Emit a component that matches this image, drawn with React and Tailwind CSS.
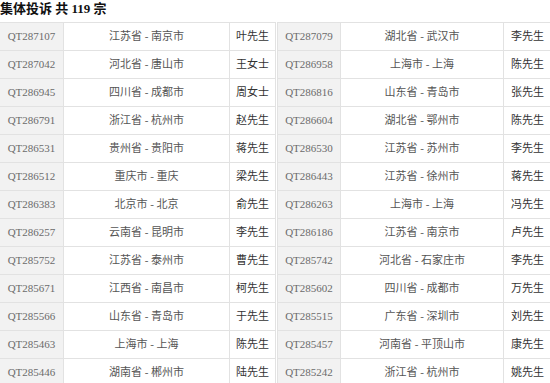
import React from "react";

const left = [
  ["QT287107", "江苏省 - 南京市", "叶先生"],
  ["QT287042", "河北省 - 唐山市", "王女士"],
  ["QT286945", "四川省 - 成都市", "周女士"],
  ["QT286791", "浙江省 - 杭州市", "赵先生"],
  ["QT286531", "贵州省 - 贵阳市", "蒋先生"],
  ["QT286512", "重庆市 - 重庆", "梁先生"],
  ["QT286383", "北京市 - 北京", "俞先生"],
  ["QT286257", "云南省 - 昆明市", "李先生"],
  ["QT285752", "江苏省 - 泰州市", "曹先生"],
  ["QT285671", "江西省 - 南昌市", "柯先生"],
  ["QT285566", "山东省 - 青岛市", "于先生"],
  ["QT285463", "上海市 - 上海", "陈先生"],
  ["QT285446", "湖南省 - 郴州市", "陆先生"],
];

const right = [
  ["QT287079", "湖北省 - 武汉市", "李先生"],
  ["QT286958", "上海市 - 上海", "陈先生"],
  ["QT286816", "山东省 - 青岛市", "张先生"],
  ["QT286604", "湖北省 - 鄂州市", "陈先生"],
  ["QT286530", "江苏省 - 苏州市", "李先生"],
  ["QT286443", "江苏省 - 徐州市", "蒋先生"],
  ["QT286263", "上海市 - 上海", "冯先生"],
  ["QT286186", "江苏省 - 南京市", "卢先生"],
  ["QT285742", "河北省 - 石家庄市", "李先生"],
  ["QT285602", "四川省 - 成都市", "万先生"],
  ["QT285515", "广东省 - 深圳市", "刘先生"],
  ["QT285457", "河南省 - 平顶山市", "康先生"],
  ["QT285242", "浙江省 - 杭州市", "姚先生"],
];

function Table({ rows, isLeft }) {
  return (
    <div
      className={
        isLeft
          ? "w-[276px] shrink-0 border-t border-[#e2e2e2]"
          : "w-[273px] shrink-0 border-t border-l border-[#e2e2e2]"
      }
    >
      {rows.map((r) => (
        <div key={r[0]} className="flex h-[28px] border-b border-[#e2e2e2]">
          <div
            className={
              (isLeft ? "w-[64px]" : "w-[63px]") +
              " shrink-0 bg-[#f2f2f2] border-r border-[#e2e2e2] flex items-center justify-center text-[#6b6b6b]"
            }
          >
            {r[0]}
          </div>
          <div
            className={
              (isLeft ? "w-[166px]" : "w-[163px]") +
              " shrink-0 border-r border-[#e2e2e2] flex items-center justify-center text-[#555]"
            }
          >
            {r[1]}
          </div>
          <div
            className={
              (isLeft ? "w-[46px] border-r border-[#e2e2e2]" : "w-[47px]") +
              " shrink-0 flex items-center justify-center text-[#333]"
            }
          >
            {r[2]}
          </div>
        </div>
      ))}
    </div>
  );
}

export default function App() {
  return (
    <div
      className="w-[550px] h-[383px] overflow-hidden bg-white"
      style={{ fontFamily: '"Liberation Serif", "Noto Sans CJK SC", serif' }}
    >
      <div className="h-[22px] text-[13px] font-bold leading-[18px] text-[#111]">
        集体投诉 共 119 宗
      </div>
      <div className="flex text-[11px] leading-none">
        <Table rows={left} isLeft />
        <div className="w-[1px] shrink-0" />
        <Table rows={right} />
      </div>
    </div>
  );
}
